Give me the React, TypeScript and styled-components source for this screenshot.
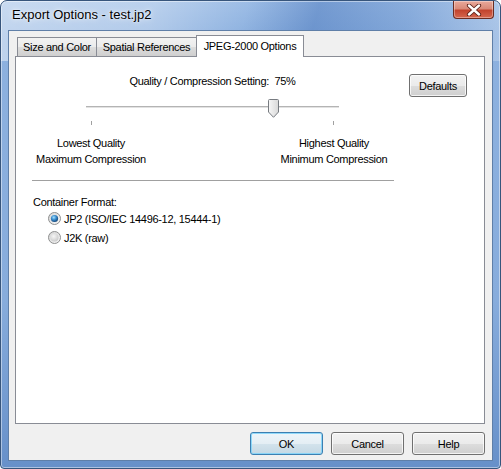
import styled, { createGlobalStyle } from "styled-components";

const GlobalStyle = createGlobalStyle`
  html, body {
    margin: 0;
    padding: 0;
    background: #ffffff;
  }
  body {
    font-family: "Liberation Sans", Arial, sans-serif;
    font-size: 11px;
    letter-spacing: -0.3px;
    color: #000;
  }
`;

const QUALITY = 75;

const App = () => {
  return (
    <>
      <GlobalStyle />
      <StyledWindow>
        <StyledTitleBar>
          <StyledTitle>Export Options - test.jp2</StyledTitle>
          <StyledCloseButton aria-label="Close">
            <svg width="16" height="12" viewBox="0 0 16 12">
              <path
                d="M3 1.5 L13 10.5 M13 1.5 L3 10.5"
                stroke="#5a1e16"
                strokeWidth="4.2"
                strokeLinecap="round"
              />
              <path
                d="M3 1.5 L13 10.5 M13 1.5 L3 10.5"
                stroke="#ffffff"
                strokeWidth="2.4"
                strokeLinecap="round"
              />
            </svg>
          </StyledCloseButton>
        </StyledTitleBar>

        <StyledClient>
          <StyledTabStrip>
            <StyledTab $width={80}>Size and Color</StyledTab>
            <StyledTab $width={101}>Spatial References</StyledTab>
            <StyledTab $width={108} $active>
              JPEG-2000 Options
            </StyledTab>
          </StyledTabStrip>

          <StyledPanel>
            <StyledTopRow>
              <StyledSliderBlock>
                <StyledCaption>Quality / Compression Setting:&nbsp; {QUALITY}%</StyledCaption>
                <StyledTrackArea>
                  <StyledTrack />
                  <StyledThumb style={{ left: `calc(${QUALITY / 100} * (100% - 10px))` }}>
                    <svg width="11" height="19" viewBox="0 0 11 19">
                      <defs>
                        <linearGradient id="thumbFill" x1="0" y1="0" x2="1" y2="0">
                          <stop offset="0" stopColor="#f7f7f7" />
                          <stop offset="1" stopColor="#d8d8d8" />
                        </linearGradient>
                      </defs>
                      <path
                        d="M0.5 1.5 Q0.5 0.5 1.5 0.5 H9.5 Q10.5 0.5 10.5 1.5 V13 L5.5 18.3 L0.5 13 Z"
                        fill="url(#thumbFill)"
                        stroke="#777b80"
                      />
                    </svg>
                  </StyledThumb>
                </StyledTrackArea>
                <StyledTicks>
                  <StyledTick />
                  <StyledTick />
                </StyledTicks>
                <StyledTickLabels>
                  <StyledTickLabel>
                    Lowest Quality
                    <br />
                    Maximum Compression
                  </StyledTickLabel>
                  <StyledTickLabel>
                    Highest Quality
                    <br />
                    Minimum Compression
                  </StyledTickLabel>
                </StyledTickLabels>
              </StyledSliderBlock>
              <StyledButton $width={58} $offset={70}>
                Defaults
              </StyledButton>
            </StyledTopRow>

            <StyledSeparator />

            <StyledGroupLabel>Container Format:</StyledGroupLabel>
            <StyledRadioRow>
              <RadioMark checked />
              JP2 (ISO/IEC 14496-12, 15444-1)
            </StyledRadioRow>
            <StyledRadioRow>
              <RadioMark />
              J2K (raw)
            </StyledRadioRow>
          </StyledPanel>

          <StyledFooter>
            <StyledButton $width={73} $isDefault>
              OK
            </StyledButton>
            <StyledButton $width={73}>Cancel</StyledButton>
            <StyledButton $width={73}>Help</StyledButton>
          </StyledFooter>
        </StyledClient>
      </StyledWindow>
    </>
  );
};

const RadioMark = ({ checked = false }: { checked?: boolean }) => {
  const id = checked ? "radioOn" : "radioOff";
  return (
    <StyledRadioBox>
      <svg width="13" height="13" viewBox="0 0 13 13">
        <defs>
          <linearGradient id={`${id}Ring`} x1="0" y1="0" x2="1" y2="1">
            <stop offset="0" stopColor="#d4d4d4" />
            <stop offset="1" stopColor="#f8f8f8" />
          </linearGradient>
          <radialGradient id={`${id}Dot`} cx="0.4" cy="0.35" r="0.7">
            {checked ? (
              <>
                <stop offset="0" stopColor="#a6e2ff" />
                <stop offset="0.45" stopColor="#3c8fd0" />
                <stop offset="1" stopColor="#0d3c6e" />
              </>
            ) : (
              <>
                <stop offset="0" stopColor="#f6f6f6" />
                <stop offset="1" stopColor="#c9c9c9" />
              </>
            )}
          </radialGradient>
        </defs>
        <circle cx="6.5" cy="6.5" r="6" fill={`url(#${id}Ring)`} stroke="#8e8f8f" />
        <circle cx="6.5" cy="6.5" r={checked ? 3.6 : 4} fill={`url(#${id}Dot)`} />
      </svg>
    </StyledRadioBox>
  );
};

export default App;

// ========== Start styled-components =========
const StyledWindow = styled.div`
  width: 501px;
  height: 469px;
  box-sizing: border-box;
  display: flex;
  flex-direction: column;
  border: 1px solid #37557c;
  border-radius: 7px 7px 4px 4px;
  background:
    linear-gradient(105deg, rgba(255, 255, 255, 0.45) 0%, rgba(255, 255, 255, 0.3) 30%,
      rgba(40, 90, 170, 0) 48%, rgba(40, 90, 170, 0.35) 62%, rgba(40, 90, 170, 0.15) 80%,
      rgba(255, 255, 255, 0.25) 100%) top / 100% 60px no-repeat,
    linear-gradient(to bottom, #9dbde6 0%, #8db1df 40px, #87acdc 300px, #6790c9 100%);
  box-shadow: inset 0 0 0 1px rgba(255, 255, 255, 0.45);
`;

const StyledTitleBar = styled.div`
  height: 29px;
  display: flex;
  align-items: flex-start;
  padding-left: 11px;
`;

const StyledTitle = styled.div`
  padding-top: 6px;
  font-family: "Liberation Sans", Arial, sans-serif;
  font-size: 13px;
  letter-spacing: 0;
  line-height: 15px;
  color: #000;
  text-shadow: 0 0 6px rgba(255, 255, 255, 0.9), 0 0 2px rgba(255, 255, 255, 0.9);
`;

const StyledCloseButton = styled.div`
  margin-left: auto;
  margin-right: 6px;
  width: 41px;
  height: 18px;
  box-sizing: border-box;
  display: flex;
  align-items: center;
  justify-content: center;
  border: 1px solid #6b2c22;
  border-top: none;
  border-radius: 0 0 4px 4px;
  background: linear-gradient(to bottom, #e9a99b 0%, #d98a79 45%, #c2442e 55%, #d5674f 100%);
  box-shadow: inset 0 0 0 1px rgba(255, 255, 255, 0.35);
`;

const StyledClient = styled.div`
  flex: 1;
  display: flex;
  flex-direction: column;
  margin: 0 7px 7px;
  border: 1px solid #5f7fa8;
  background: #f0f0f0;
  padding: 4px 0 0 0;
  min-height: 0;
`;

const StyledTabStrip = styled.div`
  display: flex;
  align-items: flex-end;
  height: 22px;
  padding-left: 8px;
  margin-bottom: -1px;
  position: relative;
  z-index: 1;
`;

const StyledTab = styled.div<{ $width: number; $active?: boolean }>`
  width: ${({ $width }) => $width}px;
  box-sizing: border-box;
  height: ${({ $active }) => ($active ? 22 : 19)}px;
  margin-bottom: ${({ $active }) => ($active ? 0 : 1)}px;
  margin-left: -1px;
  display: flex;
  align-items: center;
  justify-content: center;
  padding-bottom: ${({ $active }) => ($active ? 2 : 0)}px;
  border: 1px solid #898c95;
  border-bottom: none;
  background: ${({ $active }) =>
    $active ? "#ffffff" : "linear-gradient(to bottom, #f2f2f2 0%, #ebebeb 50%, #dddddd 51%, #cfcfcf 100%)"};
  white-space: nowrap;
  &:first-child {
    margin-left: 0;
  }
`;

const StyledPanel = styled.div`
  flex: 1;
  margin: 0 7px 0 6px;
  border: 1px solid #898c95;
  background: #ffffff;
  padding: 17px 0 0 17px;
  display: flex;
  flex-direction: column;
  align-items: flex-start;
`;

const StyledTopRow = styled.div`
  display: flex;
  align-items: flex-start;
`;

const StyledSliderBlock = styled.div`
  width: 253px;
  margin-left: 53px;
  margin-top: 1px;
  display: flex;
  flex-direction: column;
`;

const StyledCaption = styled.div`
  text-align: center;
  line-height: 13px;
  white-space: nowrap;
`;

const StyledTrackArea = styled.div`
  position: relative;
  height: 22px;
  margin-top: 11px;
`;

const StyledTrack = styled.div`
  position: absolute;
  left: 0;
  right: 0;
  top: 7px;
  height: 1px;
  background: #b4b4b4;
  border-bottom: 1px solid #e2e2e2;
`;

const StyledThumb = styled.div`
  position: absolute;
  top: 0;
  width: 11px;
  height: 19px;
  line-height: 0;
`;

const StyledTicks = styled.div`
  display: flex;
  justify-content: space-between;
  padding: 0 5px;
  height: 5px;
`;

const StyledTick = styled.div`
  width: 1px;
  height: 4px;
  background: #a0a0a0;
`;

const StyledTickLabels = styled.div`
  display: flex;
  justify-content: space-between;
  margin: 9px -55px 0;
`;

const StyledTickLabel = styled.div`
  width: 120px;
  text-align: center;
  line-height: 16px;
  white-space: nowrap;
`;

const StyledSeparator = styled.div`
  width: 362px;
  height: 1px;
  margin-top: 13px;
  margin-left: -1px;
  background: #a0a0a0;
`;

const StyledGroupLabel = styled.div`
  margin-top: 15px;
  line-height: 13px;
`;

const StyledRadioRow = styled.div`
  display: flex;
  align-items: center;
  height: 19px;
  margin-left: 15px;
  white-space: nowrap;
  &:first-of-type {
    margin-top: 1px;
  }
`;

const StyledRadioBox = styled.span`
  display: inline-flex;
  width: 13px;
  height: 13px;
  margin-right: 3px;
`;

const StyledFooter = styled.div`
  display: flex;
  justify-content: flex-end;
  gap: 8px;
  padding: 8px 7px 5px 0;
`;

const StyledButton = styled.button<{ $width: number; $offset?: number; $isDefault?: boolean }>`
  width: ${({ $width }) => $width}px;
  height: 23px;
  margin: 0 0 0 ${({ $offset = 0 }) => $offset}px;
  padding: 0;
  border: 1px solid ${({ $isDefault }) => ($isDefault ? "#3c7fb1" : "#707070")};
  border-radius: 3px;
  background: ${({ $isDefault }) =>
    $isDefault
      ? "linear-gradient(to bottom, #eef5f9 0%, #e4eef4 50%, #d3e3ec 51%, #c4d8e4 100%)"
      : "linear-gradient(to bottom, #f2f2f2 0%, #ebebeb 50%, #dddddd 51%, #cfcfcf 100%)"};
  box-shadow: inset 0 0 0 1px
    ${({ $isDefault }) => ($isDefault ? "rgba(120, 210, 250, 0.8)" : "rgba(255, 255, 255, 0.75)")};
  font-family: "Liberation Sans", Arial, sans-serif;
  font-size: 11px;
  letter-spacing: -0.3px;
  color: #000;
`;
// ========== End styled-components =========
